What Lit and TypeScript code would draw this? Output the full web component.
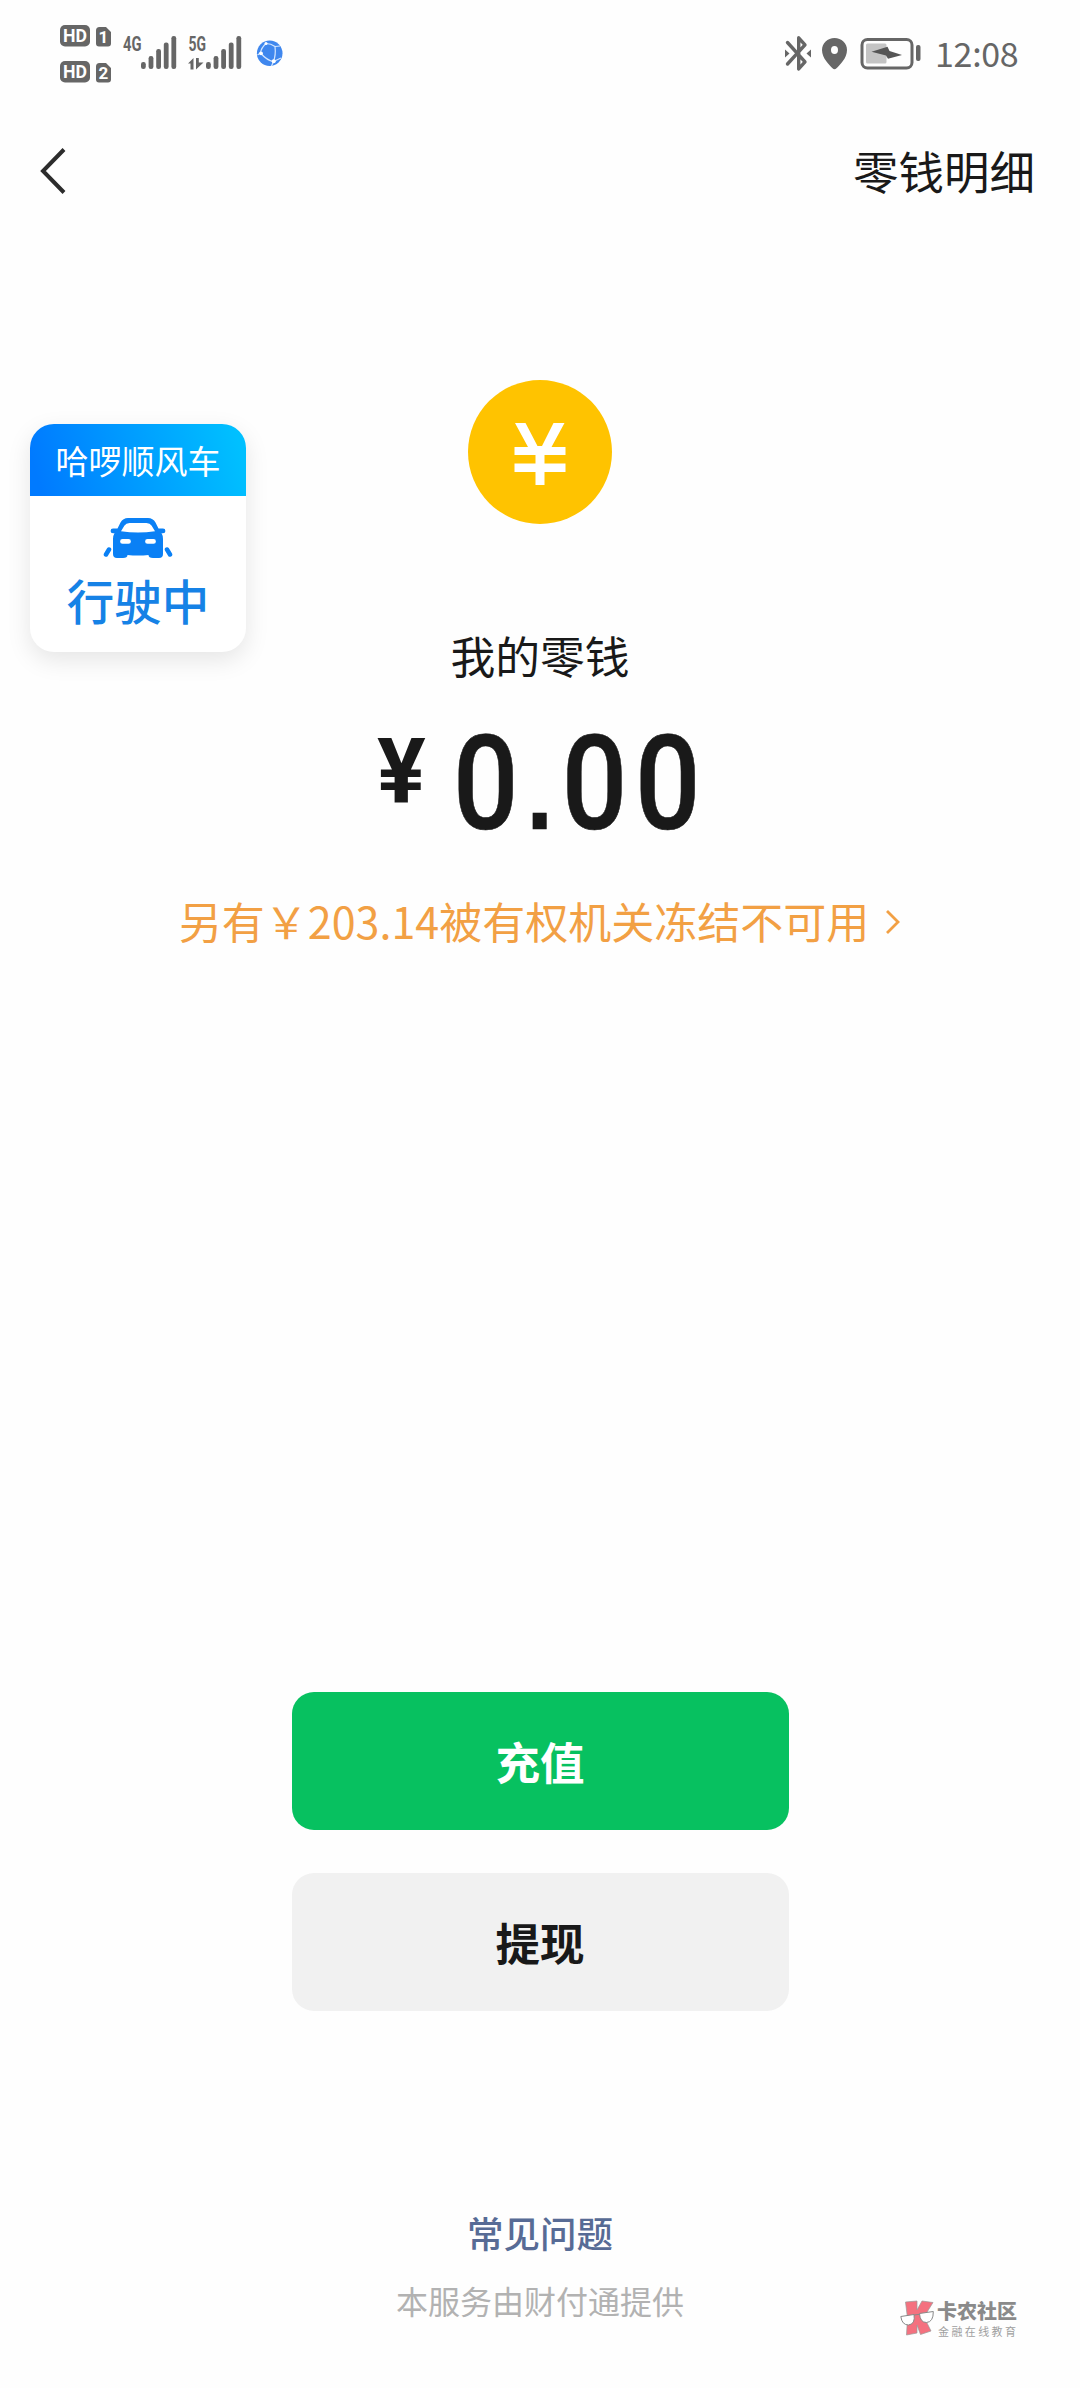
import { LitElement, html, css, svg } from "lit";
import { customElement, property } from "lit/decorators.js";

const SIGNAL_BARS = [
  { x: 0, y: 26, h: 7 },
  { x: 7.6, y: 20, h: 13 },
  { x: 15.2, y: 13, h: 20 },
  { x: 22.8, y: 6.5, h: 26.5 },
  { x: 30.4, y: 0, h: 33 },
];

@customElement("status-bar")
export class StatusBar extends LitElement {
  @property() time = "12:08";

  static styles = css`
    :host {
      display: flex;
      justify-content: space-between;
      height: 108px;
      box-sizing: border-box;
      padding: 0 60px;
      font-family: Roboto, sans-serif;
    }
    svg {
      display: block;
      flex: none;
    }
    .right {
      display: flex;
      align-items: flex-start;
    }
    .time {
      font: 400 34px/40px "Noto Sans CJK SC", sans-serif;
      color: #666;
      margin-top: 33px;
      width: 85px;
      white-space: nowrap;
      letter-spacing: -0.3px;
    }
  `;

  private bars(x: number) {
    return SIGNAL_BARS.map(
      (b) => svg`<rect x=${x + b.x} y=${36 + b.y} width="4.8" height=${b.h} rx="2.2"/>`
    );
  }

  private sim(y: number, label: string) {
    return svg`
      <rect x="0" y=${y} width="30" height="21.5" rx="5"/>
      <text x="15" y=${y + 17} text-anchor="middle" font-size="18.5" font-weight="700" fill="#fff" textLength="24" lengthAdjust="spacingAndGlyphs">HD</text>
      <path transform="translate(36 ${y + 2})" d="M3.5 0H10L15 5V16.500a3 3 0 0 1-3 3H3a3 3 0 0 1-3-3V3.500a3.500 3.500 0 0 1 3.500-3.500z"/>
      <text x="43.300" y=${y + 17.500} text-anchor="middle" font-size="17" font-weight="700" fill="#fff">${label}</text>`;
  }

  render() {
    return html`
      <svg width="230" height="108" viewBox="0 0 230 108" fill="#666">
        ${this.sim(25, "1")} ${this.sim(61, "2")}
        <text x="63" y="50.500" font-size="19.500" font-weight="700" textLength="18.500" lengthAdjust="spacingAndGlyphs">4G</text>
        ${this.bars(81)}
        <text x="128.500" y="50.500" font-size="19.500" font-weight="700" textLength="17.500" lengthAdjust="spacingAndGlyphs">5G</text>
        <path d="M128 63.500L133.500 58V69.500H130.500V63.500z M136 58h2.800v4.500h4.700l-7.500 7z"/>
        ${this.bars(146)}
        <circle cx="209.700" cy="53.300" r="12.800" fill="#3f87ee"/>
        <g fill="none" stroke="#d4e7ff" stroke-width="1.200">
          <path d="M206 43.500Q201 48 200.500 53Q207 60.500 213.500 61.500Q216 55 215 46.500Q211 43.500 206 43.500"/>
          <path d="M215 46.500L220 46M200.500 53L197.500 55M213.500 61.500L211.500 66M213.500 61.500L221 58"/>
        </g>
        <g fill="#fff"><circle cx="206" cy="43.500" r="1.500"/><circle cx="201" cy="53.300" r="1.900"/><circle cx="213.700" cy="61.300" r="2"/></g>
      </svg>
      <div class="right">
        <svg width="151" height="108" viewBox="786 0 151 108">
          <path d="M789.500 42.500L807 61.800L800.700 69V37.800L807 44.800L789.500 64" fill="none" stroke="#666" stroke-width="3.400" stroke-linejoin="round" stroke-linecap="round"/>
          <path d="M787 49.500L791.500 53.500L787 57.500zM813 49.500L808.500 53.500L813 57.500z" fill="#666"/>
          <path fill="#666" fill-rule="evenodd" d="M836.500 38C829.500 38 824 43 824 50C824 58.500 831.500 65 834.500 68.300Q836.500 70 838.500 68.300C841.500 65 849 58.500 849 50C849 43 843.500 38 836.500 38zM836.500 46a3.500 4 0 1 1 0 8a3.500 4 0 1 1 0-8z"/>
          <rect x="864" y="39.500" width="50" height="28.500" rx="5.500" fill="none" stroke="#666" stroke-width="3"/>
          <rect x="868" y="43.500" width="20.500" height="20" rx="1.500" fill="#c4c4c4"/>
          <path fill="#555" d="M873.500 51.700L889.500 46.700L891.500 51L904 55L890 58.800L888 55.500z"/>
          <rect x="918" y="45" width="4.500" height="16" rx="2" fill="#666"/>
        </svg>
        <span class="time">${this.time}</span>
      </div>
    `;
  }
}

@customElement("ride-card")
export class RideCard extends LitElement {
  static styles = css`
    :host {
      display: flex;
      flex-direction: column;
      align-items: center;
      width: 216px;
      height: 228px;
      border-radius: 24px;
      overflow: hidden;
      background: #fff;
      box-shadow: 0 8px 24px rgba(0, 0, 0, 0.1);
      font-family: "Noto Sans CJK SC", sans-serif;
    }
    .brand {
      width: 100%;
      height: 72px;
      line-height: 72px;
      text-align: center;
      color: #fff;
      font-size: 33px;
      background: linear-gradient(75deg, #007aff 5%, #00c0ff 95%);
    }
    svg {
      display: block;
      margin-top: 20px;
    }
    .state {
      margin-top: 13px;
      font-size: 47.5px;
      font-weight: 500;
      line-height: 56px;
      color: #1682e6;
    }
  `;

  render() {
    return html`
      <div class="brand">哈啰顺风车</div>
      <svg width="70" height="43" viewBox="0 0 70 43">
        <path fill="#0a80f5" fill-rule="evenodd" d="M25 2H45Q50 2 52.500 6.500L55.500 12.500H60A2.400 2.400 0 0 1 60 17.300H58.500Q60 19.500 60 23V38Q60 42 56 42H50Q45.500 42 45.500 39Q35 40 24.500 39Q24.500 42 20 42H14Q10 42 10 38V23Q10 19.500 11.500 17.300H10A2.400 2.400 0 0 1 10 12.500H14.500L17.500 6.500Q20 2 25 2z
          M26.500 7Q23 7 21.500 9.500L18 15.300Q35 17.800 52 15.300L48.500 9.500Q47 7 43.500 7z
          M19.500 23a2.400 2.400 0 0 0 0 4.800H25.500a2.400 2.400 0 0 0 0-4.800z
          M44.500 23a2.400 2.400 0 0 0 0 4.800H50.500a2.400 2.400 0 0 0 0-4.800z"/>
        <path d="M6 33.500L3 38.500M64 33.500L67 38.500" stroke="#0a80f5" stroke-width="4.500" stroke-linecap="round"/>
      </svg>
      <div class="state">行驶中</div>
    `;
  }
}

@customElement("source-mark")
export class SourceMark extends LitElement {
  static styles = css`
    :host {
      display: flex;
      gap: 3px;
      font-family: "Noto Sans CJK SC", sans-serif;
      color: #8a8a8a;
    }
    svg {
      display: block;
    }
    .name {
      font-size: 20px;
      font-weight: 900;
      line-height: 22px;
    }
    .sub {
      font-size: 11px;
      letter-spacing: 2.4px;
      line-height: 13px;
      margin: 3px 0 0 1px;
      color: #a0a0a0;
      white-space: nowrap;
    }
  `;

  render() {
    return html`
      <svg width="34" height="36" viewBox="0 0 34 36">
        <path fill="#f4717f" stroke="#999" stroke-width="0.700" d="M5.500 2L17 1V10L22 1L33 2.500L24 17L31 31L20.500 34.500L17 25V33L6.500 35L7.500 18z"/>
        <path fill="#fff" stroke="#888" stroke-width="1" d="M0.800 16.500L14 14.500Q15.500 24 8.500 25Q2 25 0.800 16.500zM19.500 13.500L33.300 11.500Q33.500 22 26.500 22.500Q20 22.500 19.500 13.500z"/>
        <path fill="none" stroke="#888" stroke-width="1" d="M14 15L19.500 14.300"/>
      </svg>
      <div>
        <div class="name">卡农社区</div>
        <div class="sub">金融在线教育</div>
      </div>
    `;
  }
}

@customElement("app-root")
export class AppRoot extends LitElement {
  static styles = css`
    :host {
      display: flex;
      flex-direction: column;
      position: relative;
      height: 2388px;
      overflow: hidden;
      background: #fefefe;
      color: #191919;
      font-family: "Noto Sans CJK SC", sans-serif;
    }
    svg {
      display: block;
    }
    .nav {
      display: flex;
      justify-content: space-between;
      align-items: center;
      height: 128px;
      padding: 0 45px 0 38px;
    }
    .detail {
      font-size: 45.500px;
      line-height: 60px;
      padding-bottom: 4px;
    }
    .balance {
      display: flex;
      flex-direction: column;
      align-items: center;
      padding-top: 144px;
    }
    .label {
      margin-top: 101px;
      font-size: 44.800px;
      line-height: 60px;
    }
    .amount {
      display: flex;
      align-items: flex-start;
      margin-top: 24px;
      width: 326px;
      height: 150px;
      font-family: Roboto, sans-serif;
    }
    .yen {
      flex: none;
      font-size: 91px;
      font-weight: 700;
      line-height: 120px;
      margin-top: 3px;
      width: 76px;
    }
    .num {
      flex: none;
      font-size: 131px;
      font-weight: 500;
      line-height: 150px;
      letter-spacing: 9px;
      white-space: nowrap;
      transform: scaleX(0.88);
      transform-origin: left center;
      -webkit-text-stroke: 0.6px #191919;
    }
    .point {
      font: 700 108px/1 "Liberation Sans", sans-serif;
      letter-spacing: 10px;
    }
    .frozen {
      display: flex;
      align-items: center;
      margin-top: 33px;
      gap: 16px;
      height: 60px;
      font-size: 43px;
      color: #f2a044;
      white-space: nowrap;
    }
    .frozen-text {
      padding-bottom: 4px;
    }
    .actions {
      display: flex;
      flex-direction: column;
      align-items: center;
      gap: 43px;
      margin-top: 740px;
    }
    .btn {
      width: 497px;
      height: 138px;
      border: 0;
      border-radius: 22px;
      font: 700 44.500px/138px "Noto Sans CJK SC", sans-serif;
      padding: 0;
      text-align: center;
    }
    .primary {
      background: #07c160;
      color: #fff;
    }
    .secondary {
      background: #f1f1f1;
      color: #191919;
    }
    .foot {
      display: flex;
      flex-direction: column;
      align-items: center;
      margin-top: 197px;
    }
    .faq {
      font-size: 36.500px;
      line-height: 50px;
      font-weight: 500;
      color: #576b95;
    }
    .provider {
      margin-top: 18px;
      font-size: 32px;
      line-height: 48px;
      color: #b2b2b2;
    }
    .floating {
      position: absolute;
      left: 30px;
      top: 424px;
    }
    .mark {
      position: absolute;
      left: 900px;
      top: 2300px;
    }
  `;

  render() {
    return html`
      <status-bar time="12:08"></status-bar>
      <div class="nav">
        <svg width="30" height="48" viewBox="0 0 30 48"><path d="M26 1.500L5 23L26 44.500" fill="none" stroke="#2c2c2c" stroke-width="4"/></svg>
        <span class="detail">零钱明细</span>
      </div>
      <div class="balance">
        <svg width="144" height="144" viewBox="0 0 144 144">
          <circle cx="72" cy="72" r="72" fill="#ffc300"/>
          <path fill="#fff" d="M47 43H57.500L69.500 66H74L85.500 43H96.500L83.500 67H97.500V75H76.500V83.500H97.500V92H76.500V105H67.500V92H46.500V83.500H67.500V75H46.500V67H60z"/>
        </svg>
        <div class="label">我的零钱</div>
        <div class="amount"><span class="yen">¥</span><span class="num">0<span class="point">.</span>00</span></div>
        <div class="frozen">
          <span class="frozen-text">另有￥203.14被有权机关冻结不可用</span>
          <svg width="16" height="26" viewBox="0 0 16 26"><path d="M2 2L13 13L2 24" fill="none" stroke="#f2a044" stroke-width="2.800"/></svg>
        </div>
      </div>
      <div class="actions">
        <button class="btn primary">充值</button>
        <button class="btn secondary">提现</button>
      </div>
      <div class="foot">
        <span class="faq">常见问题</span>
        <span class="provider">本服务由财付通提供</span>
      </div>
      <ride-card class="floating"></ride-card>
      <source-mark class="mark"></source-mark>
    `;
  }
}
